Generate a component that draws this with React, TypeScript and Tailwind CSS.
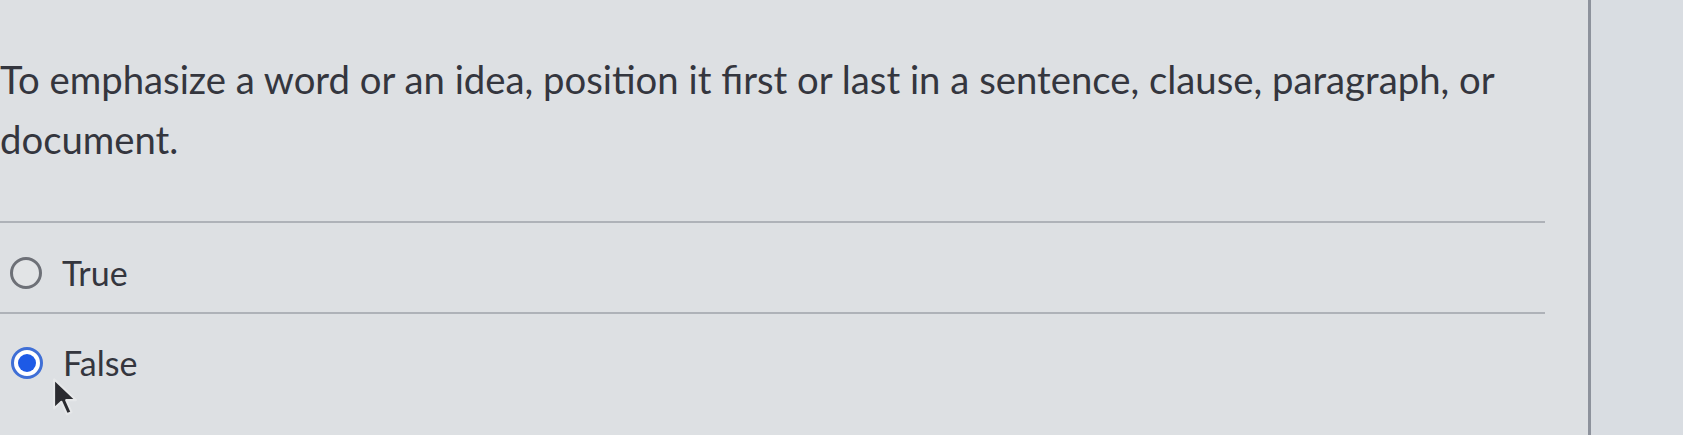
export default function App() {
  return (
    <div
      className="relative flex h-[435px] w-full overflow-hidden bg-[#dde0e3] text-[#34363e]"
      style={{ fontFamily: "Lato, 'Noto Sans', sans-serif" }}
    >
      {/* Question panel */}
      <div className="flex w-[1591px] shrink-0 flex-col border-r-[3px] border-[#8d929c]">
        <p className="mt-[49px] w-[1560px] text-[38.3px] leading-[60px]">
          To emphasize a word or an idea, position it first or last in a sentence, clause, paragraph, or
          document.
        </p>

        <div className="mt-[52px] h-[2px] w-[1545px] bg-[#aeb2b8]" />

        {/* Option: True */}
        <label className="mt-[30px] flex h-[40px] items-center gap-[20px] pl-[10px]">
          <span className="h-[32px] w-[32px] rounded-full border-[3px] border-[#6d7077] bg-[#e2e4e6]" />
          <span className="text-[34px] leading-[40px]">True</span>
        </label>

        <div className="mt-[19px] h-[2px] w-[1545px] bg-[#aeb2b8]" />

        {/* Option: False (selected) */}
        <label className="mt-[29px] flex h-[40px] items-center gap-[20px] pl-[11px]">
          <span className="flex h-[32px] w-[32px] items-center justify-center rounded-full border-[3px] border-[#3f6fd6] bg-white">
            <span className="h-[18px] w-[18px] rounded-full bg-[#1d5ae6]" />
          </span>
          <span className="text-[34px] leading-[40px]">False</span>
        </label>
      </div>

      {/* Right side panel */}
      <div className="flex-1 bg-[#d9dde2]" />

      {/* Mouse pointer */}
      <svg
        className="absolute left-[52px] top-[377px] h-[40px] w-[27px]"
        viewBox="0 0 13 19"
      >
        <path
          d="M1 1 L1 15 L4.5 11.8 L7.2 17.8 L9.4 16.8 L6.8 11 L11.5 11 Z"
          fill="#2a2b30"
          stroke="#e6e8ea"
          strokeWidth="1"
          strokeLinejoin="round"
        />
      </svg>
    </div>
  );
}
